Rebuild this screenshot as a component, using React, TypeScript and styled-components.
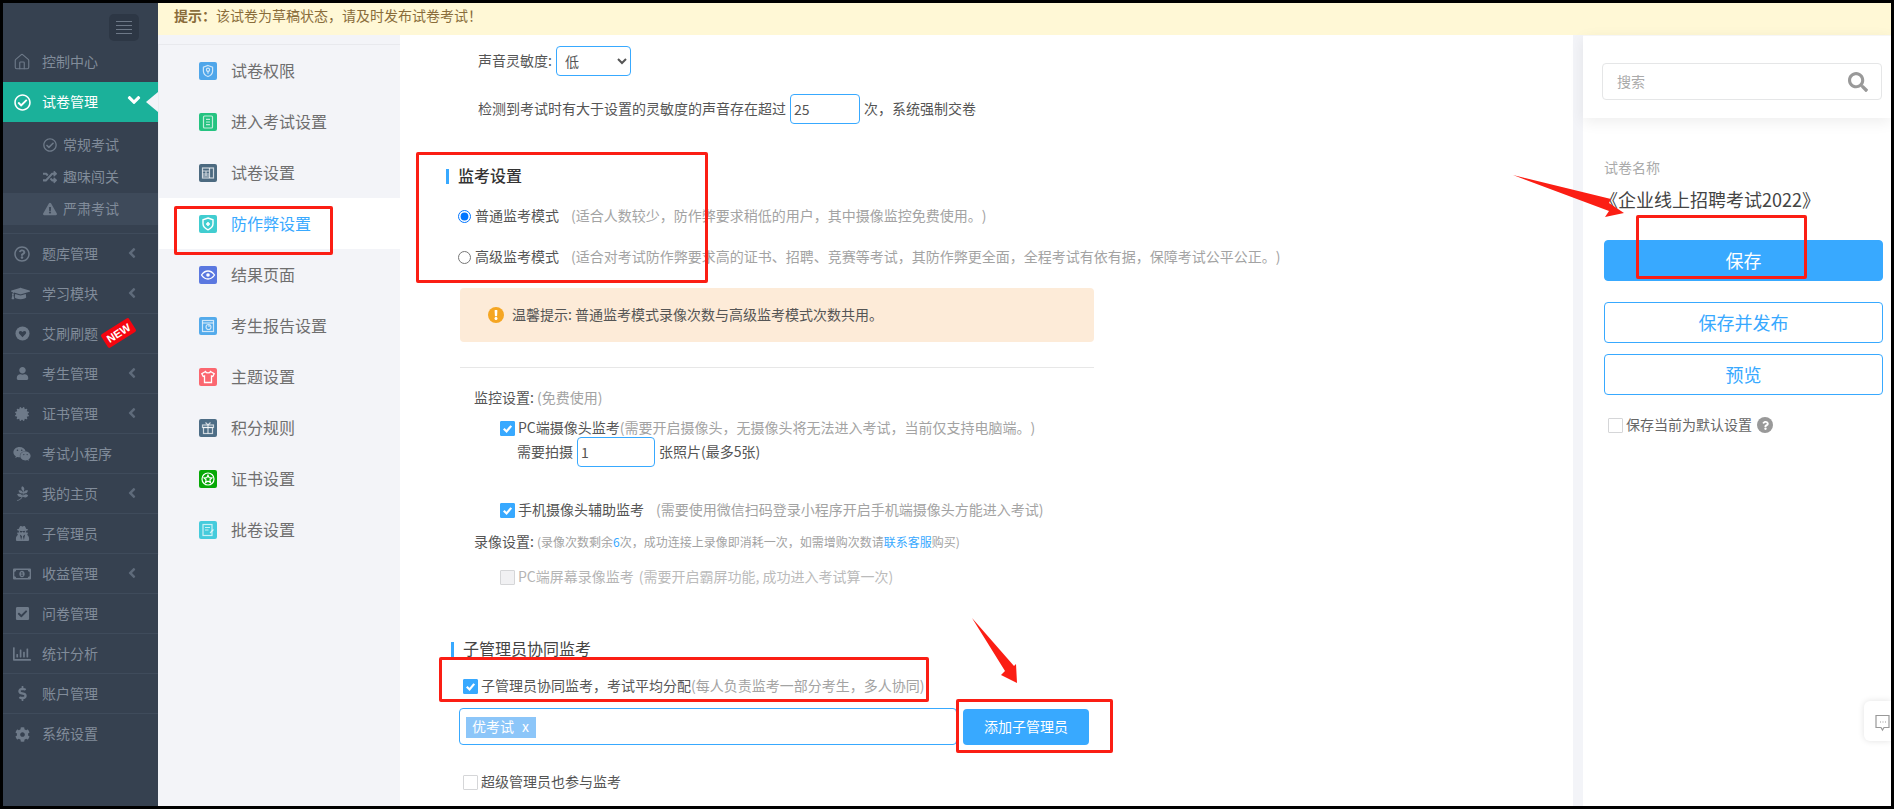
import React from "react";
import styled, { createGlobalStyle } from "styled-components";
import { House } from "lucide-react";
import {
  FaRegCheckCircle, FaRandom, FaExclamationTriangle, FaRegQuestionCircle, FaGraduationCap,
  FaUser, FaCertificate, FaWeixin, FaPagelines, FaUserSecret, FaRegMoneyBillAlt, FaCheckSquare,
  FaRegChartBar, FaDollarSign, FaCog, FaAngleLeft, FaAngleDown, FaSearch, FaHeart, FaQuestion, FaExclamation,
} from "react-icons/fa";

const Global = createGlobalStyle`
  html, body { margin: 0; padding: 0; background: #fff; }
  body { font-family: "Noto Sans CJK SC", "Liberation Sans", sans-serif; font-size: 14px; color: #555; text-spacing-trim: space-all; }
  * { box-sizing: border-box; }
`;

const BLUE = "#38a9ff";

const Frame = styled.div`
  position: relative; width: 1894px; height: 809px; border: 3px solid #000;
  display: flex; overflow: hidden; background: #fff;
`;

/* ---------- left sidebar ---------- */
const Sidebar = styled.aside`
  width: 155px; flex: none; background: #364150; color: #818c9a; display: flex; flex-direction: column;
`;
const SideTop = styled.div`
  height: 39px; padding: 11px 0 0 106px;
`;
const Burger = styled.button`
  width: 30px; height: 27px; border: 0; border-radius: 5px; background: #2d3745; padding: 7px 7px;
  display: flex; flex-direction: column; justify-content: space-between;
  span { display: block; height: 1px; background: #6d7887; }
`;
const SideItem = styled.div<{ $active?: boolean; $line?: boolean }>`
  position: relative; height: 40px; display: flex; align-items: center;
  background: ${p => (p.$active ? "#1bb19a" : "transparent")};
  color: ${p => (p.$active ? "#fff" : "#818c9a")};
  border-bottom: ${p => (p.$line ? "1px solid #3f4b5b" : "0")};
`;
const SideIcon = styled.span<{ $active?: boolean }>`
  width: 22px; margin: 0 9px 0 8px; display: flex; justify-content: center; align-items: center; font-size: 16px;
  color: ${p => (p.$active ? "#fff" : "#6e7a89")};
`;
const SideLabel = styled.span`font-size: 14px; line-height: 20px; margin-bottom: 2px;`;
const SideChevron = styled.span`
  position: absolute; left: 121px; top: 11px; font-size: 16px; color: #5f6b7b; display: flex;
`;
const ActiveCaret = styled.span`
  position: absolute; right: 0; top: 10px; width: 0; height: 0;
  border-style: solid; border-width: 10px 12px 10px 0; border-color: transparent #f3f4f8 transparent transparent;
`;
const ActiveChevron = styled.span`
  position: absolute; left: 121px; top: 8px; font-size: 20px; color: #fff; display: flex;
`;
const SubList = styled.div`
  padding: 7px 0 8px; border-bottom: 1px solid #3f4b5b; height: 112px;
`;
const SubItem = styled.div<{ $on?: boolean }>`
  height: 32px; display: flex; align-items: center; padding-left: 40px; font-size: 14px;
  background: ${p => (p.$on ? "#3e4a5a" : "transparent")};
  span { width: 20px; display: flex; justify-content: flex-start; font-size: 14px; color: #6e7a89; margin-top: 2px; }
  padding-bottom: 2px;
`;
const NewBadge = styled.span`
  position: absolute; left: 99px; top: 11px; width: 33px; height: 16px; background: #f5050f; border-radius: 2px;
  color: #fff; font: 700 11px/16px "Liberation Sans", sans-serif; text-align: center; transform: rotate(-32deg);
`;

/* ---------- main ---------- */
const Main = styled.div`flex: 1; display: flex; flex-direction: column; min-width: 0; background: #f3f4f8;`;
const Banner = styled.div`
  height: 32px; background: #fff8d6; color: #8a6d3b; font-size: 14px; line-height: 24px; padding-left: 16px; flex: none;
  b { font-weight: 700; }
`;
const Body = styled.div`flex: 1; display: flex; min-height: 0;`;

/* second-level nav */
const NavColumn = styled.nav`width: 242px; flex: none; padding-top: 9px; background: #f3f4f8;`;
const NavList = styled.div`border-top: 1px solid #e8e9ed; border-left: 1px solid #ebecf0;`;
const NavItem = styled.div<{ $on?: boolean }>`
  height: 51px; display: flex; align-items: center; padding-left: 40px; font-size: 16px;
  background: ${p => (p.$on ? "#fff" : "transparent")}; color: ${p => (p.$on ? BLUE : "#6f6f6f")};
`;
const NavLabel = styled.span`margin-bottom: 2px;`;
const NavGlyph = styled.span<{ $bg: string }>`
  width: 18px; height: 18px; border-radius: 2px; background: ${p => p.$bg}; margin-right: 14px; display: flex;
  svg { width: 18px; height: 18px; fill: none; stroke: rgba(255,255,255,.72); stroke-width: 1.2; }
`;

/* centre content */
const Content = styled.main`width: 1173px; flex: none; background: #fff; padding-top: 11px; color: #555;`;
const Line = styled.div<{ $mt?: number; $ml: number; $h?: number }>`
  display: flex; align-items: center; white-space: nowrap; font-size: 14px; padding-bottom: 2px;
  margin-top: ${p => p.$mt ?? 0}px; margin-left: ${p => p.$ml}px; height: ${p => p.$h ?? 20}px; color: #555;
`;
const FieldSelect = styled.select`
  width: 75px; height: 30px; margin: 0 0 -2px 4px; border: 1px solid ${BLUE}; border-radius: 4px; background: #fff; color: #555;
  font: 14px "Noto Sans CJK SC", sans-serif; padding-left: 4px; outline: none; flex: none;
`;
const FieldInput = styled.input<{ $w: number }>`
  width: ${p => p.$w}px; height: 30px; margin: 0 4px -2px; border: 1px solid ${BLUE}; border-radius: 4px; padding: 0 3px; color: #555;
  font: 14px "Noto Sans CJK SC", sans-serif; outline: none; flex: none;
`;
const Title = styled.div<{ $mt: number; $ml: number; $bold?: boolean; $gap: number }>`
  margin: ${p => p.$mt}px 0 0 ${p => p.$ml}px; height: 15px; line-height: 13px; border-left: 3px solid ${BLUE};
  padding-left: ${p => p.$gap}px; font-size: 16px; white-space: nowrap;
  color: ${p => (p.$bold ? "#333" : "#444")}; font-weight: ${p => (p.$bold ? 500 : 400)};
`;
const Radio = styled.input`margin: 0 4px -2px 0; width: 13px; height: 13px; flex: none;`;
const Hint = styled.span<{ $ml?: number; $size?: number; $light?: boolean }>`
  margin-left: ${p => p.$ml ?? 0}px; font-size: ${p => p.$size ?? 14}px; color: ${p => (p.$light ? "#bbb" : "#a3a3a3")};
  a { color: ${BLUE}; text-decoration: none; }
  em { color: ${BLUE}; font-style: normal; }
`;
const Notice = styled.div`
  margin: 21px 0 0 60px; width: 634px; height: 54px; background: #fdebd8; border-radius: 4px;
  padding: 0 0 2px 28px; display: flex; align-items: center; font-size: 14px; color: #555;
`;
const NoticeDot = styled.span`
  width: 16px; height: 16px; border-radius: 50%; background: #f5a623; color: #fff; margin: 0 8px -2px 0; font-size: 10px;
  display: flex; align-items: center; justify-content: center;
`;
const Divider = styled.div`margin: 25px 0 0 60px; width: 634px; height: 1px; background: #e7e7e7;`;
const Check = styled.span<{ $on?: boolean; $off?: boolean }>`
  width: 15px; height: 15px; flex: none; margin: 0 3px -2px 0; border-radius: 1px; display: flex;
  background: ${p => (p.$on ? BLUE : p.$off ? "#f1f1f3" : "#fff")};
  border: 1px solid ${p => (p.$on ? BLUE : "#d5d6d8")};
  svg { width: 13px; height: 13px; fill: none; stroke: #fff; stroke-width: 2.4; }
`;
const Muted = styled.span`color: #b5b5b5;`;
const TagRow = styled.div`margin: 12px 0 0 59px; display: flex; align-items: flex-start; gap: 6px;`;
const TagBox = styled.div`
  width: 498px; height: 37px; border: 1px solid ${BLUE}; border-radius: 4px; padding: 7px 0 0 6px;
`;
const Tag = styled.span`
  display: inline-block; width: 70px; height: 21px; line-height: 19px; background: #8cc6f9; color: #fff; font-size: 14px; padding-left: 6px;
  i { font-style: normal; margin-left: 8px; }
`;
const AddButton = styled.button`
  width: 126px; height: 36px; margin-top: 1px; border: 0; border-radius: 4px; background: ${BLUE}; color: #fff;
  font: 14px "Noto Sans CJK SC", sans-serif; padding: 0 0 2px;
`;

const Gutter = styled.div`width: 10px; flex: none; background: #f3f4f8;`;

/* right panel */
const RightPanel = styled.section`flex: 1; background: #fff; display: flex; flex-direction: column;`;
const SearchZone = styled.div`
  height: 83px; padding: 27px 9px 0 19px; box-shadow: 0 4px 14px rgba(0,0,0,.07); border-top: 1px solid #f6f6f6;
`;
const SearchBox = styled.div`
  height: 37px; border: 1px solid #e5e6e7; border-radius: 4px; display: flex; align-items: center; justify-content: space-between;
  padding: 0 13px 2px 14px; color: #aaa; font-size: 14px;
  svg { font-size: 20px; color: #999; margin-bottom: -2px; }
`;
const PanelBody = styled.div`padding: 39px 8px 0 21px;`;
const PaperLabel = styled.div`font-size: 14px; line-height: 20px; color: #aaa;`;
const PaperName = styled.div`font-size: 18px; line-height: 26px; color: #444; margin: 9px 0 0 -4px; white-space: nowrap;`;
const ActionButton = styled.button<{ $solid?: boolean; $mt: number }>`
  display: block; width: 279px; height: 41px; margin-top: ${p => p.$mt}px; border-radius: 4px; font: 18px "Noto Sans CJK SC", sans-serif;
  border: 1px solid ${BLUE}; background: ${p => (p.$solid ? BLUE : "#fff")}; color: ${p => (p.$solid ? "#fff" : BLUE)}; padding: 0 0 2px;
`;
const DefaultRow = styled.div`margin: 20px 0 0 4px; height: 20px; padding-bottom: 2px; display: flex; align-items: center; font-size: 14px; color: #666;`;
const HelpDot = styled.span`
  width: 16px; height: 16px; border-radius: 50%; background: #999; color: #fff; margin: 0 0 -2px 5px; font-size: 9px;
  display: flex; align-items: center; justify-content: center;
`;

/* overlays */
const RedBox = styled.div<{ $x: number; $y: number; $w: number; $h: number }>`
  position: absolute; left: ${p => p.$x - 3}px; top: ${p => p.$y - 3}px; width: ${p => p.$w}px; height: ${p => p.$h}px;
  border: 3px solid #fb1e14; border-radius: 2px; pointer-events: none;
`;
const ArrowLayer = styled.svg`
  position: absolute; left: -3px; top: -3px; width: 1897px; height: 812px; pointer-events: none;
`;
const ChatTab = styled.div`
  position: absolute; right: 0; top: 698px; width: 27px; height: 40px; background: #fff; border-radius: 6px 0 0 6px;
  box-shadow: 0 0 6px rgba(0,0,0,.12); padding: 13px 0 0 11px;
  svg { width: 15px; height: 18px; fill: none; stroke: #999; stroke-width: 1.2; }
`;

const Tick = () => <svg viewBox="0 0 14 14"><path d="M3 7.2l3 3 5-6" /></svg>;

const navIcons: Record<string, React.ReactNode> = {
  lock: <svg viewBox="0 0 18 18"><path d="M9 3.5l4.6 1.6v3.8c0 3-2.2 4.7-4.6 5.6-2.4-.9-4.6-2.6-4.6-5.6V5.1z" /><circle cx="9" cy="7.8" r="1.6" /><path d="M9 9.4v2.4" /></svg>,
  doc: <svg viewBox="0 0 18 18"><rect x="4.5" y="3" width="9" height="12" rx="1" /><path d="M7 6.3h4M7 9h4M7 11.7h4" /></svg>,
  grid: <svg viewBox="0 0 18 18"><rect x="3.5" y="4" width="11" height="10" /><path d="M3.5 7h7M3.5 10h7M3.5 12h7M10.5 4v10M7 7v5" /></svg>,
  shield: <svg viewBox="0 0 18 18"><path d="M9 3l5 1.8v4c0 3-2.4 4.9-5 6-2.6-1.1-5-3-5-6v-4z" style={{ strokeWidth: 1.4, stroke: "#fff" }} /><path d="M7 9h4M9 7v4" style={{ strokeWidth: 1.6, stroke: "#fff" }} /></svg>,
  eye: <svg viewBox="0 0 18 18"><path d="M2.5 9C4.5 6 6.5 5 9 5s4.500 1 6.500 4c-2 3-4 4-6.500 4S4.500 12 2.500 9z" style={{ strokeWidth: 1.3, stroke: "#fff" }} /><circle cx="9" cy="9" r="1.800" style={{ fill: "#fff", stroke: "none" }} /></svg>,
  report: <svg viewBox="0 0 18 18"><rect x="3.500" y="3.500" width="11" height="11" /><path d="M3.500 6h11" /><circle cx="9.500" cy="10" r="2.500" /><path d="M10 8v2" /></svg>,
  shirt: <svg viewBox="0 0 18 18"><path d="M6.500 3.500L2.800 5.800l1.400 2.700 1.300-.6V14.500h7V7.900l1.300.6 1.400-2.700-3.700-2.300c-.5 1.900-4.500 1.900-5 0z" style={{ strokeWidth: 1.300, stroke: "#fff" }} /></svg>,
  gift: <svg viewBox="0 0 18 18"><rect x="3.500" y="6" width="11" height="2.500" /><rect x="4.500" y="8.500" width="9" height="6" /><path d="M9 6v8.500M6.500 3.500L9 6l2.500-2.500" /></svg>,
  star: <svg viewBox="0 0 18 18"><circle cx="9" cy="9" r="6" style={{ stroke: "#fff" }} /><path d="M9 5.200l1.200 2.500 2.700.3-2 1.900.6 2.700L9 11.200l-2.500 1.400.6-2.700-2-1.900 2.700-.3z" style={{ stroke: "#fff" }} /></svg>,
  pen: <svg viewBox="0 0 18 18"><rect x="4" y="3.500" width="9" height="11" /><path d="M6 6.500h5M6 9h3.500M11 12l3.500-3.500" /></svg>,
};

const navItems: { label: string; bg: string; icon: string; on?: boolean }[] = [
  { label: "试卷权限", bg: "#4fa6ea", icon: "lock" },
  { label: "进入考试设置", bg: "#25c381", icon: "doc" },
  { label: "试卷设置", bg: "#4c6a80", icon: "grid" },
  { label: "防作弊设置", bg: "#41cdd0", icon: "shield", on: true },
  { label: "结果页面", bg: "#5b78e0", icon: "eye" },
  { label: "考生报告设置", bg: "#53aaeb", icon: "report" },
  { label: "主题设置", bg: "#fb6770", icon: "shirt" },
  { label: "积分规则", bg: "#4d6d86", icon: "gift" },
  { label: "证书设置", bg: "#07a907", icon: "star" },
  { label: "批卷设置", bg: "#45cbdc", icon: "pen" },
];

const CircleHeart = () => (
  <svg width="15" height="15" viewBox="0 0 16 16">
    <circle cx="8" cy="8" r="7.500" fill="currentColor" />
    <path d="M8 12L4.500 8.300C3 6.200 5.800 4 8 6.400 10.200 4 13 6.200 11.500 8.300z" fill="#364150" />
  </svg>
);

const sideItems: { label: string; icon: React.ReactNode; chev?: boolean; badge?: boolean }[] = [
  { label: "题库管理", icon: <FaRegQuestionCircle />, chev: true },
  { label: "学习模块", icon: <FaGraduationCap size={19} style={{ marginLeft: -4 }} />, chev: true },
  { label: "艾刷刷题", icon: <CircleHeart />, badge: true },
  { label: "考生管理", icon: <FaUser size={13} />, chev: true },
  { label: "证书管理", icon: <FaCertificate size={14} />, chev: true },
  { label: "考试小程序", icon: <FaWeixin size={18} /> },
  { label: "我的主页", icon: <FaPagelines size={15} />, chev: true },
  { label: "子管理员", icon: <FaUserSecret size={15} /> },
  { label: "收益管理", icon: <FaRegMoneyBillAlt size={18} />, chev: true },
  { label: "问卷管理", icon: <FaCheckSquare size={15} /> },
  { label: "统计分析", icon: <FaRegChartBar size={18} /> },
  { label: "账户管理", icon: <FaDollarSign size={15} /> },
  { label: "系统设置", icon: <FaCog size={15} /> },
];

export default function App() {
  return (
    <>
      <Global />
      <Frame>
        <Sidebar>
          <SideTop>
            <Burger aria-label="menu"><span /><span /><span /><span /></Burger>
          </SideTop>
          <SideItem>
            <SideIcon><House size={18} strokeWidth={1.5} /></SideIcon>
            <SideLabel>控制中心</SideLabel>
          </SideItem>
          <SideItem $active>
            <SideIcon $active><FaRegCheckCircle size={17} /></SideIcon>
            <SideLabel>试卷管理</SideLabel>
            <ActiveChevron><FaAngleDown /></ActiveChevron>
            <ActiveCaret />
          </SideItem>
          <SubList>
            <SubItem><span><FaRegCheckCircle /></span>常规考试</SubItem>
            <SubItem><span><FaRandom /></span>趣味闯关</SubItem>
            <SubItem $on><span><FaExclamationTriangle /></span>严肃考试</SubItem>
          </SubList>
          {sideItems.map((it, i) => (
            <SideItem key={it.label} $line={i < sideItems.length - 1}>
              <SideIcon>{it.icon}</SideIcon>
              <SideLabel>{it.label}</SideLabel>
              {it.chev && <SideChevron><FaAngleLeft /></SideChevron>}
              {it.badge && <NewBadge>NEW</NewBadge>}
            </SideItem>
          ))}
        </Sidebar>

        <Main>
          <Banner><b>提示：</b>该试卷为草稿状态，请及时发布试卷考试！</Banner>
          <Body>
            <NavColumn>
              <NavList>
                {navItems.map(n => (
                  <NavItem key={n.label} $on={n.on}>
                    <NavGlyph $bg={n.bg}>{navIcons[n.icon]}</NavGlyph>
                    <NavLabel>{n.label}</NavLabel>
                  </NavItem>
                ))}
              </NavList>
            </NavColumn>

            <Content>
              <Line $ml={78} $h={30}>
                声音灵敏度:
                <FieldSelect defaultValue="低"><option>低</option><option>中</option><option>高</option></FieldSelect>
              </Line>
              <Line $ml={78} $h={30} $mt={18}>
                检测到考试时有大于设置的灵敏度的声音存在超过
                <FieldInput $w={70} defaultValue="25" />
                次，系统强制交卷
              </Line>

              <Title $mt={45} $ml={46} $gap={9} $bold>监考设置</Title>
              <Line $ml={58} $mt={22}>
                <Radio type="radio" name="mode" defaultChecked />
                普通监考模式
                <Hint $ml={12}>(适合人数较少，防作弊要求稍低的用户，其中摄像监控免费使用。)</Hint>
              </Line>
              <Line $ml={58} $mt={21}>
                <Radio type="radio" name="mode" />
                高级监考模式
                <Hint $ml={12}>(适合对考试防作弊要求高的证书、招聘、竞赛等考试，其防作弊更全面，全程考试有依有据，保障考试公平公正。)</Hint>
              </Line>
              <Notice>
                <NoticeDot><FaExclamation /></NoticeDot>
                温馨提示: 普通监考模式录像次数与高级监考模式次数共用。
              </Notice>
              <Divider />

              <Line $ml={74} $mt={20}>监控设置:&nbsp;<Hint>(免费使用)</Hint></Line>
              <Line $ml={100} $mt={10}>
                <Check $on><Tick /></Check>
                PC端摄像头监考<Hint>(需要开启摄像头，无摄像头将无法进入考试，当前仅支持电脑端。)</Hint>
              </Line>
              <Line $ml={117} $mt={-1} $h={30}>
                需要拍摄<FieldInput $w={78} defaultValue="1" />张照片(最多5张)
              </Line>
              <Line $ml={100} $mt={33}>
                <Check $on><Tick /></Check>
                手机摄像头辅助监考<Hint $ml={12}>(需要使用微信扫码登录小程序开启手机端摄像头方能进入考试)</Hint>
              </Line>
              <Line $ml={74} $mt={12}>
                录像设置:&nbsp;
                <Hint $size={12}>(录像次数剩余<em>6</em>次，成功连接上录像即消耗一次，如需增购次数请<a href="#kf">联系客服</a>购买)</Hint>
              </Line>
              <Line $ml={100} $mt={15}>
                <Check $off />
                <Muted>PC端屏幕录像监考</Muted>
                <Hint $ml={5} $light>(需要开启霸屏功能, 成功进入考试算一次)</Hint>
              </Line>

              <Title $mt={55} $ml={51} $gap={9}>子管理员协同监考</Title>
              <Line $ml={63} $mt={19}>
                <Check $on><Tick /></Check>
                子管理员协同监考，考试平均分配<Hint>(每人负责监考一部分考生，多人协同)</Hint>
              </Line>
              <TagRow>
                <TagBox><Tag>优考试<i>x</i></Tag></TagBox>
                <AddButton>添加子管理员</AddButton>
              </TagRow>
              <Line $ml={63} $mt={27}>
                <Check />
                超级管理员也参与监考
              </Line>
            </Content>

            <Gutter />

            <RightPanel>
              <SearchZone>
                <SearchBox>搜索<FaSearch /></SearchBox>
              </SearchZone>
              <PanelBody>
                <PaperLabel>试卷名称</PaperLabel>
                <PaperName>《企业线上招聘考试2022》</PaperName>
                <ActionButton $solid $mt={28}>保存</ActionButton>
                <ActionButton $mt={21}>保存并发布</ActionButton>
                <ActionButton $mt={11}>预览</ActionButton>
                <DefaultRow>
                  <Check />保存当前为默认设置
                  <HelpDot><FaQuestion /></HelpDot>
                </DefaultRow>
              </PanelBody>
            </RightPanel>
          </Body>
        </Main>

        <RedBox $x={416} $y={152} $w={292} $h={131} />
        <RedBox $x={174} $y={206} $w={159} $h={49} />
        <RedBox $x={439} $y={657} $w={490} $h={45} />
        <RedBox $x={956} $y={699} $w={157} $h={54} />
        <RedBox $x={1636} $y={215} $w={171} $h={64} />
        <ArrowLayer viewBox="0 0 1897 812">
          <polygon points="972,618 1014,666 1016,664 1017,683 1001,675 1005,671" fill="#fb1e14" />
          <polygon points="1513,175 1611,199 1609,203 1624,213 1605,217 1609,211" fill="#fb1e14" />
        </ArrowLayer>
        <ChatTab>
          <svg viewBox="0 0 15 18"><path d="M1 1.500h13v12H9L7.500 16 6 13.500H1z" /><path d="M5 8h1M7.500 8h1M10 8h1" /></svg>
        </ChatTab>
      </Frame>
    </>
  );
}
